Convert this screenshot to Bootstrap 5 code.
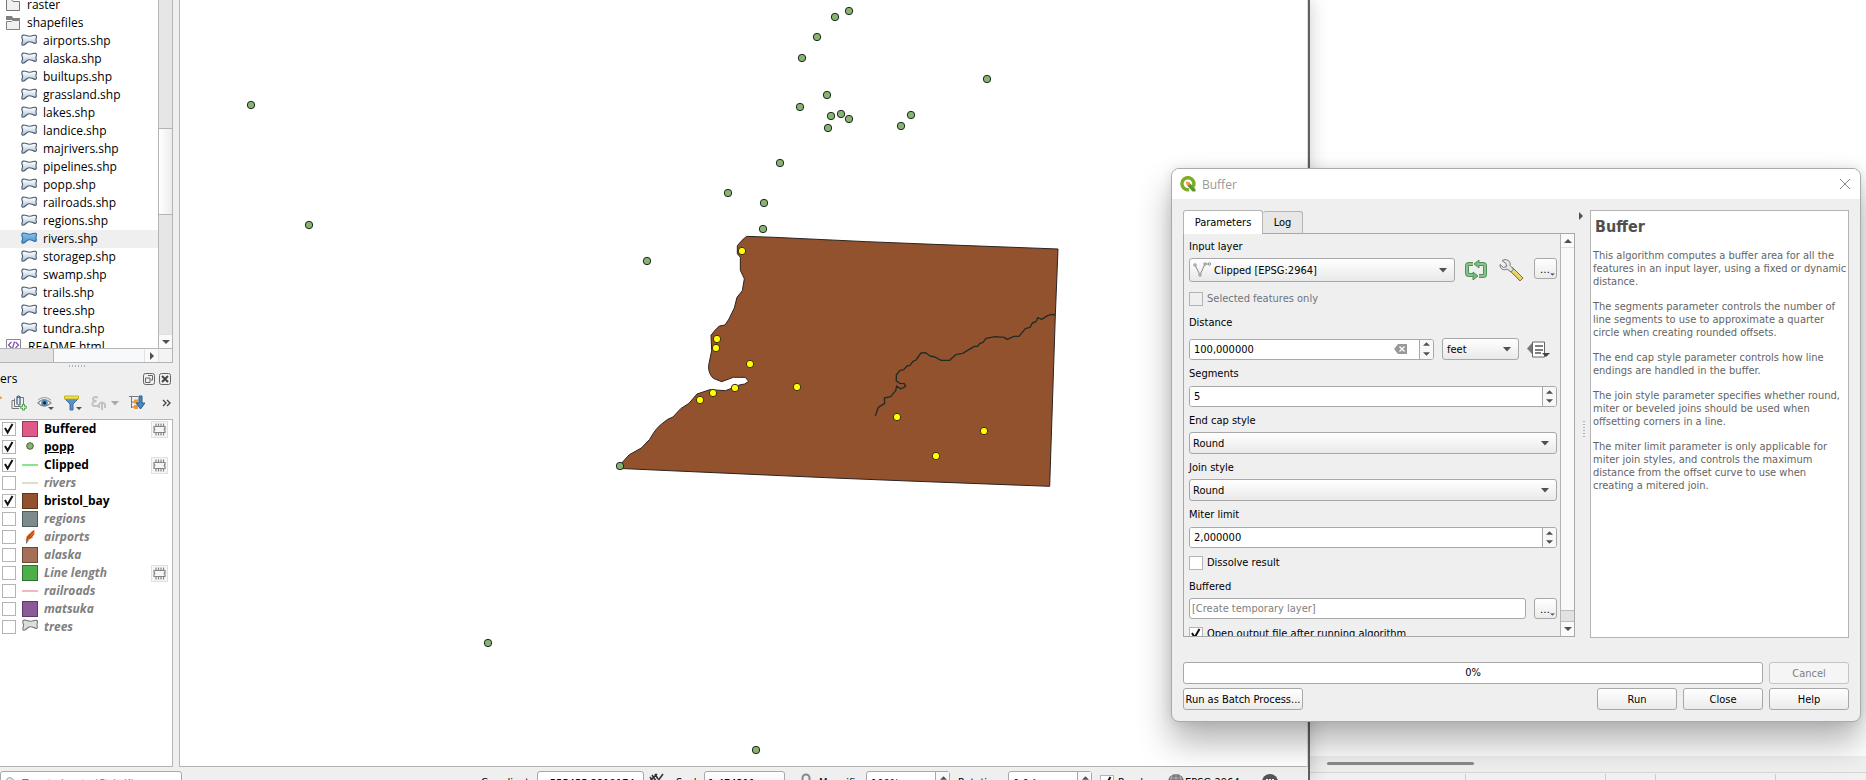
<!DOCTYPE html>
<html lang="en">
<head>
<meta charset="utf-8">
<meta name="viewport" content="width=device-width, initial-scale=1">
<title>QGIS - Buffer</title>
<link rel="stylesheet" href="https://cdn.jsdelivr.net/npm/bootstrap@5.3.0/dist/css/bootstrap.min.css">
<script src="https://cdn.jsdelivr.net/npm/bootstrap@5.3.0/dist/js/bootstrap.bundle.min.js"></script>
<style>
:root{--face:#efefef;--edge:#b4b4b4;--tree-font:"Open Sans","Noto Sans",sans-serif;--ui-font:"DejaVu Sans Condensed","DejaVu Sans",sans-serif}
body{font-family:var(--tree-font);font-size:12px;line-height:18px;color:#000;background:#fff}
svg{display:block;flex:none}
ul{list-style:none;margin:0;padding:0}
.bg-face{background:var(--face)}
.min-0{min-width:0;min-height:0}
.qgis-win{border-right:2px solid #606060;box-shadow:0 0 18px rgba(0,0,0,.2);z-index:1}
.dock{width:179px}
/* browser tree */
.tree-frame{height:363px;width:173px;border-right:1px solid var(--edge);border-bottom:1px solid var(--edge)}
.tree{margin-top:-4px}
.tree li{height:18px;display:flex;align-items:center;gap:6px;padding-left:21px;white-space:nowrap}
.tree li.top-item{padding-left:6px;gap:7px}
.tree li.sel{background:#efefef}
.tree li:not(.top-item) svg{margin-bottom:3px}
.vbar{width:14px;background:#e6e6e6;border-left:1px solid var(--edge)}
.vbar-thumb{background:linear-gradient(90deg,#fff,#ececec);border:solid var(--edge);border-width:1px 0}
.arrow-btn{border:0;padding:0;background:#fafafa;display:flex;align-items:center;justify-content:center}
.hbar{height:14px;border-top:1px solid var(--edge);background:#f3f3f3}
.hbar-track{width:54px;background:#e4e4e4;border-right:1px solid var(--edge)}
.dots{width:17px;height:2px;margin:2px 93px 3px auto;background:repeating-linear-gradient(90deg,#b0b0b0 0 1px,transparent 1px 3px)}
.dots-v{width:2px;height:17px;background:repeating-linear-gradient(#b0b0b0 0 1px,transparent 1px 3px)}
.title-btn{width:12px;height:12px;border:0;padding:0;background:none}
.tool{border:0;padding:0;background:none}
.dock-tools{margin:7px 0 8px}
/* layers */
.layers{width:173px;background:#fff;border:solid var(--edge);border-width:1px 1px 1px 0}
.layers li{height:18px;display:flex;align-items:center;padding:0 4px 0 2px;font-weight:700}
.layers li.off label{color:#808080;font-style:italic}
.layers label{flex:1;margin-left:6px;white-space:nowrap}
.sw{width:16px;height:16px;border:1px solid rgba(0,0,0,.35);margin-left:6px}
.sw-line{width:16px;height:2px;margin-left:6px}
.sym{margin-left:6px}
.mem{width:17px;height:17px;background:#f6f6f6;border:1px solid #e0e0e0}
.form-check-input.tick{width:14px;height:14px;margin:0;flex:none;border:1px solid #b4b4b4;border-radius:0;background-color:#fff;background-size:14px 14px;box-shadow:none}
.form-check-input.tick:checked{background-color:#fff;background-image:url("data:image/svg+xml,%3Csvg xmlns='http://www.w3.org/2000/svg' viewBox='0 0 14 14'%3E%3Cpath d='M3 6l2.600 4.500L10.500 2' fill='none' stroke='%23111' stroke-width='2'/%3E%3C/svg%3E")}
.form-check-input.tick:disabled{opacity:1;background-color:var(--face)}
/* map */
.map{border-left:1px solid var(--edge);border-bottom:1px solid var(--edge);border-right:1px solid #ddd;background:#fff}
/* status bar: lower half runs off the screen edge */
.status{height:13px;padding:4px 30px 0 0;font-family:var(--ui-font);font-size:11px}
.status>*{height:24px}
.status label,.status span{line-height:24px;overflow:hidden;white-space:nowrap}
.box{border:1px solid #a8a8a8;border-radius:3px;background:#fff;padding:0 4px;font:11px var(--ui-font);color:#000;min-width:0}
/* window on the right */
.back-win{width:556px}
.back-scroll{height:16px;background:#f0f0f0;padding:6px 0 0 17px}
.back-thumb{width:147px;height:3px;background:#8a8a8a;border-radius:2px}
.back-status{height:8px;border-top:1px solid #d6d6d6;background:#f1f1f1;padding-top:1px}
.back-status i{border-right:1px solid #ccc}
/* dialog */
.dlg{position:absolute;right:5px;top:168px;width:690px;z-index:5;background:var(--face);border:1px solid #aaa;border-radius:8px;overflow:hidden;font:11px/14px var(--ui-font);box-shadow:0 20px 34px rgba(0,0,0,.3),0 0 12px rgba(0,0,0,.1)}
.dlg-head{height:30px;background:#fff;padding:0 10px 0 8px;gap:6px;font:12px var(--tree-font);color:#999}
.dlg-main{padding:11px}
.dlg-tab{border:1px solid var(--edge);border-bottom:0;border-radius:3px 3px 0 0;font:11px var(--ui-font);background:#e7e7e7;color:#000;padding:0}
.dlg-tab.on{background:#fff;height:24px;width:80px;margin-bottom:-1px;z-index:1}
.dlg-tab.log{height:22px;width:40px;border-left:0}
.pane{height:404px;border:1px solid #a8a8a8}
.form-area{padding:5px 3px 0 5px}
.form-area>label{display:block;height:16px;line-height:16px;margin-bottom:3px}
.field{margin-bottom:6px}
.check-row{display:flex;align-items:center;padding:2px 0 9px}
.btn-q,.combo.form-select,.spin{border:1px solid #a8a8a8;border-radius:3px;font:11px var(--ui-font);color:#000}
.btn-q{background:linear-gradient(#fff,#ebebeb);padding:0;height:22px;width:80px}
.btn-q:disabled{color:#808080;border-color:#c4c4c4;background:#f5f5f5}
.btn-wide{width:120px}
.btn-dots{width:23px;height:21px;display:flex;align-items:end;justify-content:end;padding:0 1px 2px 0}
.combo.form-select{height:22px;padding:0 20px 0 3px;background:url("data:image/svg+xml,%3Csvg xmlns='http://www.w3.org/2000/svg' viewBox='0 0 8 5'%3E%3Cpath d='M0 0h8L4 4.500z' fill='%23505050'/%3E%3C/svg%3E") no-repeat right 7px center/8px 5px,linear-gradient(#fff,#e9e9e9)}
.combo.layer{height:24px;padding-left:24px;width:266px}
.combo.unit{width:77px;padding-left:4px}
.spin{height:21px;background:#fff;overflow:hidden}
.form-area>.spin{margin-top:4px}
.spin input,.line-in{border:0;outline:0;padding:0 4px;font:11px var(--ui-font);background:#fff;min-width:0}
.line-in{border:1px solid #a8a8a8;border-radius:3px;height:21px;padding:0 2px}
.line-in::placeholder{color:#808080}
.spin-btns{width:14px;border-left:1px solid #a8a8a8;background:#f8f8f8}
.spin-btns button{border:0;padding:0;background:none;flex:1;display:flex;align-items:center;justify-content:center}
.splitter{width:15px;padding:2px 0 0 4px}
.help{width:259px;height:428px;border:1px solid var(--edge);background:#fff;color:#646464;padding:7px 0 7px 2px;line-height:13px}
.help h2{font:700 16px/18px "DejaVu Sans Condensed",sans-serif;color:#505050;margin:0 0 13px 2px}
.help p{margin:0 0 12px}
.prog{height:22px;border:1px solid #a8a8a8;border-radius:3px;background:#fff}
.btn-line{display:flex;gap:6px}
</style>
</head>
<body class="vh-100 overflow-hidden">
<svg width="0" height="0" class="position-absolute" aria-hidden="true">
<defs>
<linearGradient id="gb" x1="0" y1="0" x2="0" y2="1"><stop offset=".2" stop-color="#f4f7fa"/><stop offset="1" stop-color="#a9bfd8"/></linearGradient>
<linearGradient id="gs" x1="0" y1="0" x2="0" y2="1"><stop offset="0" stop-color="#8cc0ea"/><stop offset="1" stop-color="#4d92cc"/></linearGradient>
<symbol id="poly" viewBox="0 0 16 12"><path d="M.800 3C.800 1 3 .500 5.300 1.500 8 2.800 10 2.300 12 1.600c2-.700 3.500-.300 3.500 1.200 0 1.200-.700 1.800-.500 3.200.200 1.200.800 2.200 0 3-1 1-2.400 0-4-.800-2-.800-4-.700-5.500.800C4 10.500 2.500 11.700 1.200 11 0 10 1.600 8 1.600 6.500S.800 4.500.800 3z" stroke-width="1.100"/></symbol>
<symbol id="chip" viewBox="0 0 15 15"><path d="M2 4.500h11v2.200a.800.800 0 0 0 0 1.600v2.200H2V8.300a.800.800 0 0 0 0-1.600zM4 4V1.500M6.500 4V1.500M9 4V1.500M11.500 4V1.500M4 11v2.500M6.500 11v2.500M9 11v2.500M11.500 11v2.500" fill="none" stroke="#858585" stroke-width="1.200"/></symbol>
<symbol id="up" viewBox="0 0 8 4"><path d="M0 4L4 0l4 4z" fill="#505050"/></symbol>
<symbol id="down" viewBox="0 0 8 4"><path d="M0 0l4 4 4-4z" fill="#505050"/></symbol>
</defs>
</svg>

<div class="d-flex h-100">
<main class="qgis-win bg-face flex-grow-1 d-flex flex-column min-0 position-relative">
<div class="d-flex flex-grow-1 min-0">
<section class="dock d-flex flex-column flex-shrink-0" aria-label="Panels">
 <div class="tree-frame d-flex flex-column bg-white flex-shrink-0">
  <div class="d-flex flex-grow-1 min-0">
   <div class="flex-grow-1 overflow-hidden">
   <ul class="tree">
    <li class="top-item"><svg width="14" height="12" viewBox="0 0 14 12"><path d="M.500 11.500V.500h5l1.500 2h6.500v9z" fill="#f0f0f0" stroke="#777"/></svg>raster</li>
    <li class="top-item"><svg width="14" height="14" viewBox="0 0 14 14"><path d="M0 0h6l1 2h7v2H0z" fill="#808080"/><path d="M.500 13.500V5.500h5l1-1h7v9z" fill="#f0f0f0" stroke="#808080"/></svg>shapefiles</li>
    <li><svg width="16" height="12" fill="url(#gb)" stroke="#4a5a6c"><use href="#poly"/></svg>airports.shp</li>
    <li><svg width="16" height="12" fill="url(#gb)" stroke="#4a5a6c"><use href="#poly"/></svg>alaska.shp</li>
    <li><svg width="16" height="12" fill="url(#gb)" stroke="#4a5a6c"><use href="#poly"/></svg>builtups.shp</li>
    <li><svg width="16" height="12" fill="url(#gb)" stroke="#4a5a6c"><use href="#poly"/></svg>grassland.shp</li>
    <li><svg width="16" height="12" fill="url(#gb)" stroke="#4a5a6c"><use href="#poly"/></svg>lakes.shp</li>
    <li><svg width="16" height="12" fill="url(#gb)" stroke="#4a5a6c"><use href="#poly"/></svg>landice.shp</li>
    <li><svg width="16" height="12" fill="url(#gb)" stroke="#4a5a6c"><use href="#poly"/></svg>majrivers.shp</li>
    <li><svg width="16" height="12" fill="url(#gb)" stroke="#4a5a6c"><use href="#poly"/></svg>pipelines.shp</li>
    <li><svg width="16" height="12" fill="url(#gb)" stroke="#4a5a6c"><use href="#poly"/></svg>popp.shp</li>
    <li><svg width="16" height="12" fill="url(#gb)" stroke="#4a5a6c"><use href="#poly"/></svg>railroads.shp</li>
    <li><svg width="16" height="12" fill="url(#gb)" stroke="#4a5a6c"><use href="#poly"/></svg>regions.shp</li>
    <li class="sel"><svg width="16" height="12" fill="url(#gs)" stroke="#2f6ea5"><use href="#poly"/></svg>rivers.shp</li>
    <li><svg width="16" height="12" fill="url(#gb)" stroke="#4a5a6c"><use href="#poly"/></svg>storagep.shp</li>
    <li><svg width="16" height="12" fill="url(#gb)" stroke="#4a5a6c"><use href="#poly"/></svg>swamp.shp</li>
    <li><svg width="16" height="12" fill="url(#gb)" stroke="#4a5a6c"><use href="#poly"/></svg>trails.shp</li>
    <li><svg width="16" height="12" fill="url(#gb)" stroke="#4a5a6c"><use href="#poly"/></svg>trees.shp</li>
    <li><svg width="16" height="12" fill="url(#gb)" stroke="#4a5a6c"><use href="#poly"/></svg>tundra.shp</li>
    <li class="top-item"><svg width="15" height="16" viewBox="0 0 15 16"><path d="M.500.500h14v15H.500z" fill="#fff" stroke="#888"/><path d="M5.500 3L2.500 6l3 3M9.500 3l3 3-3 3M8.500 2.500l-2 7" fill="none" stroke="#8a4fc0" stroke-width="1.300"/></svg>README.html</li>
   </ul>
   </div>
   <div class="vbar d-flex flex-column">
    <div style="flex:129"></div><div class="vbar-thumb" style="flex:85"></div><div style="flex:120"></div>
    <button class="arrow-btn border-top" style="height:14px" aria-label="Scroll down"><svg width="8" height="4"><use href="#down"/></svg></button>
   </div>
  </div>
  <div class="hbar d-flex">
   <div class="hbar-track"></div><div class="flex-grow-1 bg-light"></div>
   <button class="arrow-btn border-start border-end" style="width:15px" aria-label="Scroll right"><svg width="4" height="8" viewBox="0 0 4 8"><path d="M0 0l4 4-4 4z" fill="#505050"/></svg></button>
   <div style="width:13px"></div>
  </div>
 </div>
 <div class="dots flex-shrink-0"></div>
 <div class="d-flex align-items-center pe-2 flex-shrink-0">
  <span class="me-auto">ers</span>
  <button class="title-btn me-1" aria-label="Float"><svg width="12" height="12" viewBox="0 0 12 12" fill="none" stroke="#666"><rect x=".5" y=".5" width="11" height="11" rx="2"/><path d="M5 2.500h4.500V7H7.500M2.500 5h4.500v4.500H2.500z"/></svg></button>
  <button class="title-btn" aria-label="Close panel"><svg width="12" height="12" viewBox="0 0 12 12" fill="none" stroke="#666"><rect x=".5" y=".5" width="11" height="11" rx="2"/><path d="M3 3l6 6M9 3l-6 6" stroke="#444" stroke-width="2"/></svg></button>
 </div>
 <div class="dock-tools d-flex align-items-center flex-shrink-0 pe-2 justify-content-between">
  <svg width="2" height="16" viewBox="0 0 2 16"><path d="M0 2l1.500 1.500" stroke="#e89a3c" stroke-width="2"/></svg>
  <button class="tool" aria-label="Add group"><svg width="16" height="16" viewBox="0 0 16 16" fill="none" stroke="#777"><path d="M3.500 5.500H1v8h7M3.500 3.500v8h7M6 2.500h6.500v7"/><path d="M6 9.500V2.500a1.500 1.500 0 0 1 3 0v7a1.200 1.200 0 0 1-2 0" stroke="#33597f" stroke-width="1.200"/><path d="M12.500 9v6.500M9.200 12.300h6.500" stroke="#5aa55a" stroke-width="3"/><path d="M12.500 10v4.500M10.200 12.300h4.500" stroke="#e6f4e6"/></svg></button>
  <button class="tool" aria-label="Map themes"><svg width="18" height="16" viewBox="0 0 18 16"><path d="M1 8q6-7 13 0-7 6-13 0z" fill="#fff" stroke="#8a8a8a" stroke-width="1.200"/><path d="M1 5q6-5 13 0" fill="none" stroke="#999"/><circle cx="7.500" cy="8" r="3.300" fill="#4f87b5"/><circle cx="7.500" cy="8" r="1.400" fill="#123"/><path d="M11 12h6l-3 3z" fill="#555"/></svg></button>
  <button class="tool" aria-label="Filter legend"><svg width="18" height="16" viewBox="0 0 18 16"><path d="M1 4h13l-5 5v6H6V9z" fill="#5b8fc4" stroke="#3d6fa3"/><path d="M.500 1h14v3H.500z" fill="#f3e14c" stroke="#c4b32e"/><path d="M12 12h6l-3 3z" fill="#555"/></svg></button>
  <button class="tool" aria-label="Filter by expression"><svg width="28" height="16" viewBox="0 0 28 16" fill="none" stroke="#c2c2c2" stroke-width="2"><path d="M7 2.500Q2 1 2 4q0 2 3.500 2Q1 6.500 1.500 9.500 2 12 7 10.500M8 9q3-3 6 0M8 9v4M11 8v7M14 9v4"/><path d="M20 6h8l-4 4.500z" fill="#aaa" stroke="none"/></svg></button>
  <button class="tool" aria-label="Expand all"><svg width="16" height="16" viewBox="0 0 16 16"><path d="M0 1.500h9M2.500 2v11M2.500 7h3M2.500 12h3" stroke="#777" fill="none"/><path d="M5 4.500h4v4H5zM5 10h4v4H5z" fill="#f3962f"/><path d="M10 1h3v7h3l-4.500 6L7 8h3z" fill="#4d86bd" stroke="#2d5f92"/></svg></button>
  <button class="tool ms-2" aria-label="More"><svg width="9" height="8" viewBox="0 0 9 8" fill="none" stroke="#444" stroke-width="1.300"><path d="M1 1l3 3-3 3M5 1l3 3-3 3"/></svg></button>
 </div>
 <div class="layers flex-grow-1">
 <ul>
  <li><input class="form-check-input tick" type="checkbox" id="l1" checked><span class="sw" style="background:#e15989"></span><label for="l1">Buffered</label><svg class="mem"><use href="#chip"/></svg></li>
  <li><input class="form-check-input tick" type="checkbox" id="l2" checked><svg class="sym" width="16" height="16"><circle cx="8" cy="7" r="3.300" fill="#85b66f" stroke="#4c5f44"/></svg><label for="l2" class="text-decoration-underline">popp</label></li>
  <li><input class="form-check-input tick" type="checkbox" id="l3" checked><span class="sw-line" style="background:#8be38b"></span><label for="l3">Clipped</label><svg class="mem"><use href="#chip"/></svg></li>
  <li class="off"><input class="form-check-input tick" type="checkbox" id="l4"><span class="sw-line" style="background:#e0ddcd"></span><label for="l4">rivers</label></li>
  <li><input class="form-check-input tick" type="checkbox" id="l5" checked><span class="sw" style="background:#91522d"></span><label for="l5">bristol_bay</label></li>
  <li class="off"><input class="form-check-input tick" type="checkbox" id="l6"><span class="sw" style="background:#7d8b8f"></span><label for="l6">regions</label></li>
  <li class="off"><input class="form-check-input tick" type="checkbox" id="l7"><svg class="sym" width="16" height="16" viewBox="0 0 16 16"><path d="M12.500 1L10 2 4 8l1 .500-1.500 1.500L4.500 12 11 8.500l-.500-1L12.500 5z" fill="#e5702a"/><path d="M11.500 2L5 11M8 5l-3 4M12 5l-5 5" stroke="#a8431a"/><path d="M4 11v4l3-3.500z" fill="#777"/></svg><label for="l7">airports</label></li>
  <li class="off"><input class="form-check-input tick" type="checkbox" id="l8"><span class="sw" style="background:#a47158"></span><label for="l8">alaska</label></li>
  <li class="off"><input class="form-check-input tick" type="checkbox" id="l9"><span class="sw" style="background:#4caf4a"></span><label for="l9">Line length</label><svg class="mem"><use href="#chip"/></svg></li>
  <li class="off"><input class="form-check-input tick" type="checkbox" id="l10"><span class="sw-line" style="background:#f3b6c3"></span><label for="l10">railroads</label></li>
  <li class="off"><input class="form-check-input tick" type="checkbox" id="l11"><span class="sw" style="background:#8d5a99"></span><label for="l11">matsuka</label></li>
  <li class="off"><input class="form-check-input tick" type="checkbox" id="l12"><svg class="sym mb-1" width="16" height="12" fill="#dedede" stroke="#777"><use href="#poly"/></svg><label for="l12">trees</label></li>
 </ul>
 </div>
</section>

<section class="map flex-grow-1 min-0 overflow-hidden" aria-label="Map canvas">
<svg width="100%" height="100%" viewBox="180 0 1128 766" preserveAspectRatio="xMinYMin slice">
 <g transform="translate(600 220) scale(.33333)" stroke-linejoin="round">
  <path d="M440 49L523 52 800 65 1000 73 1374 87 1366 285 1349 799 925 783 700 774 52 745 67 727 88 704 124 684 149 658Q168 624 185 612L203 598 219 591 242 566 267 550 291 522 330 509 376 512 395 505 418 495 434 492 446 484 436 472 400 472 365 485 340 475Q324 460 326 436L335 392 333 346 345 331 358 318 375 315 387 297 403 264 411 232 427 212 433 176 421 151V112L412 101V77L426 61z" fill="#91522d" stroke="#2a2320" stroke-width="3"/>
  <path d="M1366 285L1355 283 1343 287 1325 298 1313 293 1308 305 1297 309 1290 322 1276 326 1257 349 1242 349 1222 358 1212 352 1186 350 1158 355 1149 367 1139 371 1133 379 1123 379 1088 400 1067 404 1049 421 1023 421 1005 411 990 408 977 398 963 399 948 420 939 424 930 436 921 438 911 449 900 451 889 465V483L900 490 913 491 917 499 902 507 890 498 887 512 872 530 853 534 854 550 835 562 826 587" fill="none" stroke="#232b25" stroke-width="4"/>
 </g>
 <g fill="#85b66f" stroke="#232323">
  <circle cx="849" cy="11" r="3.700"/><circle cx="835" cy="17" r="3.700"/><circle cx="817" cy="37" r="3.700"/><circle cx="802" cy="58" r="3.700"/><circle cx="987" cy="79" r="3.700"/><circle cx="827" cy="95" r="3.700"/><circle cx="800" cy="107" r="3.700"/><circle cx="831" cy="116" r="3.700"/><circle cx="841" cy="114" r="3.700"/><circle cx="849" cy="119" r="3.700"/><circle cx="828" cy="128" r="3.700"/><circle cx="911" cy="115" r="3.700"/><circle cx="901" cy="126" r="3.700"/><circle cx="780" cy="163" r="3.700"/><circle cx="764" cy="203" r="3.700"/><circle cx="763" cy="229" r="3.700"/><circle cx="728" cy="193" r="3.700"/><circle cx="647" cy="261" r="3.700"/><circle cx="251" cy="105" r="3.700"/><circle cx="309" cy="225" r="3.700"/><circle cx="488" cy="643" r="3.700"/><circle cx="756" cy="750" r="3.700"/><circle cx="620" cy="466" r="3.700"/>
 </g>
 <g fill="#ff0" stroke="#3a2a10">
  <circle cx="742" cy="251" r="3.700"/><circle cx="717" cy="339" r="3.700"/><circle cx="716" cy="348" r="3.700"/><circle cx="750" cy="364" r="3.700"/><circle cx="797" cy="387" r="3.700"/><circle cx="735" cy="388" r="3.700"/><circle cx="713" cy="393" r="3.700"/><circle cx="700" cy="400" r="3.700"/><circle cx="897" cy="417" r="3.700"/><circle cx="984" cy="431" r="3.700"/><circle cx="936" cy="456" r="3.700"/>
 </g>
</svg>
</section>
</div>

<footer class="status d-flex overflow-hidden flex-shrink-0 align-items-start">
 <input class="box" style="width:182px" placeholder="🔍 Type to locate (Ctrl+K)" aria-label="Locator">
 <label for="s1" class="ms-auto" style="width:56px">Coordinate</label><input id="s1" class="box text-center" style="width:107px" value="-555455,2219174">
 <svg class="mx-1" width="16" height="24" viewBox="0 0 16 24"><path d="M2 6l4 6M4 4l4 6M7 3l3 5M2 10l7-7M15 3L7 14" stroke="#333" stroke-width="1.600"/></svg>
 <label for="s2" class="ms-2" style="width:28px">Scale</label><select id="s2" class="box form-select combo h-auto" style="width:81px;min-height:24px"><option>1:474311</option></select>
 <svg class="ms-3" width="10" height="24" viewBox="0 0 10 24"><path d="M1.500 10V7a3.500 3.500 0 0 1 7 0v3" fill="none" stroke="#888" stroke-width="2"/><path d="M0 10h10v8H0z" fill="#888"/></svg>
 <label for="s3" class="ms-2" style="width:47px">Magnifier</label><div class="box d-flex p-0" style="width:84px"><input id="s3" class="border-0 w-100 bg-transparent px-1" value="100%"><span class="spin-btns d-flex flex-column flex-shrink-0 px-1 pt-1"><svg width="7" height="4"><use href="#up"/></svg></span></div>
 <label for="s4" class="ms-2" style="width:50px">Rotation</label><div class="box d-flex p-0" style="width:84px"><input id="s4" class="border-0 w-100 bg-transparent px-1" value="0,0 °"><span class="spin-btns d-flex flex-column flex-shrink-0 px-1 pt-1"><svg width="7" height="4"><use href="#up"/></svg></span></div>
 <input class="form-check-input tick ms-2 mt-1" type="checkbox" id="s5" checked><label for="s5" class="ms-1" style="width:50px">Render</label>
 <svg width="17" height="24" viewBox="0 0 17 24"><circle cx="8" cy="11" r="8" fill="#777"/><path d="M0 11h16M8 3v16M2 7h12M4 4q-3 7 0 14M12 4q3 7 0 14" stroke="#bbb" stroke-width=".8" fill="none"/></svg>
 <span style="width:77px">EPSG:2964</span>
 <svg width="16" height="24" viewBox="0 0 16 24"><circle cx="8" cy="11" r="8" fill="#555"/><path d="M4 9h2M7 9h2M10 9h2" stroke="#fff" stroke-width="2"/></svg>
</footer>
</main>

<aside class="back-win bg-white d-flex flex-column flex-shrink-0">
 <div class="flex-grow-1"></div>
 <div class="back-scroll"><div class="back-thumb"></div></div>
 <div class="back-status d-flex"><i style="width:156px"></i><i style="width:140px"></i><i style="width:50px"></i><i style="width:120px"></i></div>
</aside>
</div>

<section class="dlg" role="dialog" aria-labelledby="dt">
<header class="dlg-head d-flex align-items-center">
 <svg width="16" height="16" viewBox="0 0 16 16"><path d="M13.200 10.500A6 6 0 1 0 9 13.600" fill="none" stroke="#7eab25" stroke-width="3.400"/><path d="M7 6.500l2.500.300L15.500 13v2.500h-3L7.500 10z" fill="#589632"/><path d="M6 5.500l3.600.400v3L8.500 9 6 8.300z" fill="#f39a4b"/></svg>
 <span id="dt" class="me-auto">Buffer</span>
 <button class="tool" aria-label="Close dialog"><svg width="10" height="10" viewBox="0 0 10 10"><path d="M0 0l10 10M10 0L0 10" stroke="#888"/></svg></button>
</header>
<div class="dlg-main">
 <div class="d-flex">
  <div class="flex-grow-1 min-0">
   <div class="d-flex align-items-end" role="tablist"><button class="dlg-tab on position-relative" role="tab">Parameters</button><button class="dlg-tab log" role="tab">Log</button></div>
   <div class="pane d-flex overflow-hidden">
    <form class="form-area flex-grow-1 min-0">
     <label for="f1">Input layer</label>
     <div class="d-flex mb-2">
      <div class="position-relative"><select id="f1" class="form-select combo layer"><option>Clipped [EPSG:2964]</option></select>
      <svg class="position-absolute top-0 start-0 mt-1 ms-1" width="18" height="16" viewBox="0 0 18 16" fill="none" stroke="#888"><path d="M2 3l5 10L12 2h4"/><g fill="#fff"><circle cx="2" cy="3" r="1.200"/><circle cx="7" cy="13" r="1.200"/><circle cx="12" cy="2" r="1.200"/><circle cx="16.500" cy="2" r="1.200"/></g></svg></div>
      <button type="button" class="tool ms-2" aria-label="Iterate"><svg width="26" height="20" viewBox="0 0 22 20"><path d="M8 4H4a2 2 0 0 0-2 2v7a2 2 0 0 0 2 2h4M14 16h4a2 2 0 0 0 2-2V6a2 2 0 0 0-2-2h-5" fill="none" stroke="#4f9159" stroke-width="4"/><path d="M14 0v8L9 4zM8 12v8l5-4z" fill="#7cb683" stroke="#4f9159"/><path d="M8 4H4a2 2 0 0 0-2 2v7a2 2 0 0 0 2 2h4M14 16h4a2 2 0 0 0 2-2V6a2 2 0 0 0-2-2h-5" fill="none" stroke="#8ac391" stroke-width="2"/></svg></button>
      <button type="button" class="tool mx-auto" aria-label="Advanced options"><svg width="25" height="24" viewBox="0 0 25 24"><path d="M10 12l3-3 11 11-3 3z" fill="#ecd267" stroke="#7d6d3a"/><path d="M13 14.500l8 8" stroke="#b59b41"/><path d="M3 2.500l4 3 .500 3-3 1-3.500-3C.500 11 5 13 8 11l4 3 2.500-3L11 7.500C12.500 3 7 0 3 2.500z" fill="#e4e7e6" stroke="#777"/></svg></button>
      <button type="button" class="btn-q btn-dots" aria-label="Browse input">…<svg width="5" height="3" viewBox="0 0 8 4"><use href="#down"/></svg></button>
     </div>
     <div class="check-row"><input class="form-check-input tick" type="checkbox" id="f2" disabled><label for="f2" class="ms-1 text-secondary">Selected features only</label></div>
     <label for="f3">Distance</label>
     <div class="d-flex align-items-center field pt-1">
      <div class="spin d-flex" style="width:245px"><input id="f3" class="flex-grow-1" value="100,000000"><button type="button" class="tool me-2" aria-label="Clear"><svg class="me-1" width="13" height="10" viewBox="0 0 13 10"><path d="M4 0h9v10H4L0 5z" fill="#999"/><path d="M5.500 2.500l5 5M10.500 2.500l-5 5" stroke="#fff" stroke-width="1.300"/></svg></button><div class="spin-btns d-flex flex-column"><button type="button" aria-label="Up"><svg width="7" height="4"><use href="#up"/></svg></button><button type="button" aria-label="Down"><svg width="7" height="4"><use href="#down"/></svg></button></div></div>
      <select class="form-select combo unit mx-2" aria-label="Units"><option>feet</option></select>
      <button type="button" class="tool" aria-label="Data defined override"><svg width="23" height="17" viewBox="0 0 23 17"><path d="M5 2v11L0 7.500z" fill="#777"/><path d="M5.500 1h12v15h-12z" fill="#fff" stroke="#666"/><path d="M8 5h8M8 9h8M8 12h6" stroke="#555" stroke-width="1.500"/><path d="M15 12h8l-4 4z" fill="#444"/></svg></button>
     </div>
     <label for="f4">Segments</label>
     <div class="spin field d-flex"><input id="f4" class="flex-grow-1" value="5"><div class="spin-btns d-flex flex-column"><button type="button" aria-label="Up"><svg width="7" height="4"><use href="#up"/></svg></button><button type="button" aria-label="Down"><svg width="7" height="4"><use href="#down"/></svg></button></div></div>
     <label for="f5">End cap style</label>
     <select id="f5" class="form-select combo field"><option>Round</option></select>
     <label for="f6">Join style</label>
     <select id="f6" class="form-select combo field"><option>Round</option></select>
     <label for="f7">Miter limit</label>
     <div class="spin field d-flex"><input id="f7" class="flex-grow-1" value="2,000000"><div class="spin-btns d-flex flex-column"><button type="button" aria-label="Up"><svg width="7" height="4"><use href="#up"/></svg></button><button type="button" aria-label="Down"><svg width="7" height="4"><use href="#down"/></svg></button></div></div>
     <div class="check-row"><input class="form-check-input tick" type="checkbox" id="f8"><label for="f8" class="ms-1">Dissolve result</label></div>
     <label for="f9">Buffered</label>
     <div class="d-flex field"><input id="f9" class="line-in flex-grow-1" placeholder="[Create temporary layer]"><button type="button" class="btn-q btn-dots ms-2" aria-label="Browse output">…<svg width="5" height="3" viewBox="0 0 8 4"><use href="#down"/></svg></button></div>
     <div class="check-row"><input class="form-check-input tick" type="checkbox" id="f10" checked><label for="f10" class="ms-1">Open output file after running algorithm</label></div>
    </form>
    <div class="vbar d-flex flex-column flex-shrink-0 bg-light">
     <button class="arrow-btn border-bottom" style="height:14px" aria-label="Scroll up"><svg width="8" height="4"><use href="#up"/></svg></button>
     <div class="flex-grow-1"></div>
     <div style="height:12px;background:#e2e2e2;border:solid #bbb;border-width:1px 0"></div>
     <button class="arrow-btn" style="height:14px" aria-label="Scroll down"><svg width="8" height="4"><use href="#down"/></svg></button>
    </div>
   </div>
  </div>
  <div class="splitter d-flex flex-column align-items-start">
   <svg width="4" height="8" viewBox="0 0 4 8"><path d="M0 0l4 4-4 4z" fill="#505050"/></svg>
   <div class="dots-v my-auto ms-1"></div>
  </div>
  <article class="help">
   <h2>Buffer</h2>
   <p>This algorithm computes a buffer area for all the features in an input layer, using a fixed or dynamic distance.</p>
   <p>The segments parameter controls the number of line segments to use to approximate a quarter circle when creating rounded offsets.</p>
   <p>The end cap style parameter controls how line endings are handled in the buffer.</p>
   <p>The join style parameter specifies whether round, miter or beveled joins should be used when offsetting corners in a line.</p>
   <p>The miter limit parameter is only applicable for miter join styles, and controls the maximum distance from the offset curve to use when creating a mitered join.</p>
  </article>
 </div>
 <div class="btn-line mt-4 mb-1"><div class="prog flex-grow-1 d-flex align-items-center justify-content-center">0%</div><button class="btn-q" disabled>Cancel</button></div>
 <div class="btn-line"><button class="btn-q btn-wide me-auto">Run as Batch Process...</button><button class="btn-q">Run</button><button class="btn-q">Close</button><button class="btn-q">Help</button></div>
</div>
</section>
</body>
</html>
